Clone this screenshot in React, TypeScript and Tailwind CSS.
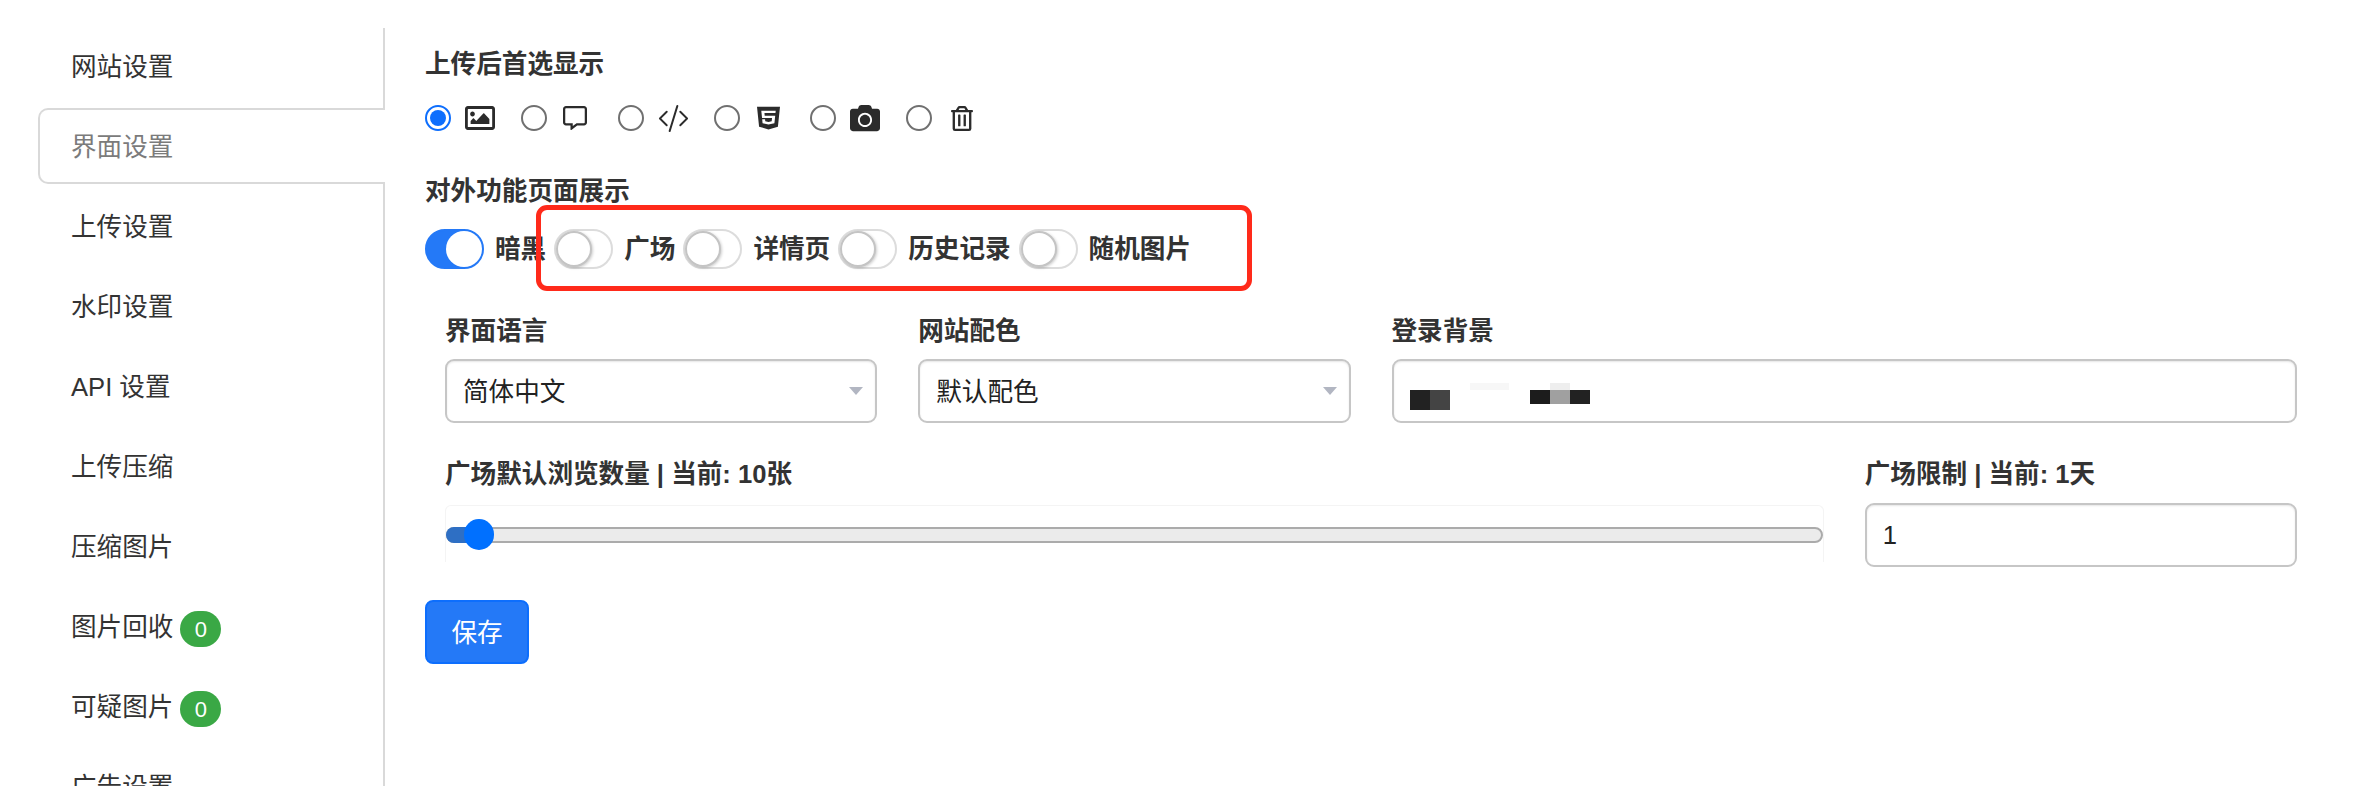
import { BsCodeSlash } from "react-icons/bs";
import { FaCamera, FaHtml5, FaRegCommentAlt, FaRegImage, FaRegTrashAlt } from "react-icons/fa";

const cjk = "font-['Helvetica','Liberation_Sans','Noto_Sans_CJK_SC',sans-serif]";

const navItems = [
  { name: "网站设置" },
  { name: "界面设置", active: true },
  { name: "上传设置" },
  { name: "水印设置" },
  { name: "API 设置" },
  { name: "上传压缩" },
  { name: "压缩图片" },
  { name: "图片回收", badge: 0 },
  { name: "可疑图片", badge: 0 },
  { name: "广告设置" },
];

const previewIcons = [
  {
    key: "image",
    icon: <FaRegImage preserveAspectRatio="none" className="ml-[14px] w-[30px] h-[32px] shrink-0" />,
  },
  { key: "chat", icon: <FaRegCommentAlt className="ml-[16px] w-[24px] h-[24px] shrink-0" /> },
  { key: "code", icon: <BsCodeSlash className="ml-[14px] w-[31px] h-[31px] shrink-0" /> },
  {
    key: "html",
    icon: <FaHtml5 preserveAspectRatio="none" className="ml-[17px] w-[23px] h-[26px] shrink-0" />,
  },
  { key: "camera", icon: <FaCamera className="ml-[14px] w-[30px] h-[30px] shrink-0" /> },
  { key: "trash", icon: <FaRegTrashAlt className="ml-[18px] w-[24px] h-[25px] shrink-0" /> },
];

const switches = [
  { name: "暗黑", on: true },
  { name: "广场" },
  { name: "详情页" },
  { name: "历史记录" },
  { name: "随机图片" },
];

const Sidebar = () => (
  <ul className="w-[347px] ml-[38px] mt-[28px] shrink-0 border-r-2 border-[#d9d9d9] h-[1000px]">
    {navItems.map(({ name, active, badge }) => (
      <li
        key={name}
        className={
          active
            ? "h-[76px] mb-[4px] -mr-[2px] pl-[31px] flex items-center gap-[7px] bg-white border-2 border-r-0 border-[#d9d9d9] rounded-l-[10px] text-[#7b7b7b]"
            : "h-[76px] mb-[4px] pl-[33px] flex items-center gap-[7px] text-[#333333]"
        }
      >
        <span className="pt-[3px] text-[25.6px] leading-none">{name}</span>
        {badge !== undefined && (
          <span className="mt-[6px] w-[41px] h-[36px] rounded-[18px] bg-[#3aa845] text-white text-[22px] font-medium flex items-center justify-center">
            {badge}
          </span>
        )}
      </li>
    ))}
  </ul>
);

const Toggle = ({ name, on }: { name: string; on?: boolean }) => (
  <div className="flex items-center gap-[11px]">
    {on ? (
      <span className="w-[59px] h-[40px] rounded-full bg-[#2479f7] border-2 border-[#2479f7] flex justify-end">
        <span className="w-[36px] h-[36px] rounded-full bg-white" />
      </span>
    ) : (
      <span className="w-[59px] h-[40px] rounded-full bg-white border-2 border-[#dcdcdc] flex">
        <span className="w-[36px] h-[36px] rounded-full bg-white border-2 border-[#c4c4c4] shadow-[1px_1px_3px_rgba(0,0,0,0.2)]" />
      </span>
    )}
    <span className="pt-[2px] text-[25.6px] font-semibold leading-none text-[#333333]">
      {name}
    </span>
  </div>
);

const fieldBox =
  "h-[64px] border-2 border-[#c6c6c6] rounded-[9px] bg-white shadow-[inset_0_1px_2px_rgba(0,0,0,0.1)] flex items-center text-[25.6px] text-[#222222]";

const SelectBox = ({ value }: { value: string }) => (
  <div className={`${fieldBox} pl-[16px] pr-[12px] justify-between`}>
    <span className="pt-[2px]">{value}</span>
    <span className="w-0 h-0 border-x-[7px] border-x-transparent border-t-[8px] border-t-[#b2b6c2]" />
  </div>
);

const FieldLabel = ({ children }: { children: React.ReactNode }) => (
  <div className="h-[32px] pt-[2px] leading-[32px] text-[25.6px] font-semibold text-[#333333] whitespace-nowrap">
    {children}
  </div>
);

const App = () => {
  return (
    <div className={`${cjk} flex h-[786px] overflow-hidden bg-white`}>
      <Sidebar />
      <div className="relative flex-1 pl-[40px] pr-[65px] pt-[46px]">
        <FieldLabel>上传后首选显示</FieldLabel>
        <div className="mt-[27px] h-[26px] flex items-center text-[#2b2b2b]">
          {previewIcons.map(({ key, icon }, index) => (
            <div key={key} className="w-[96.3px] flex items-center">
              {index === 0 ? (
                <span className="w-[26px] h-[26px] rounded-full border-2 border-[#0d6efd] p-[3px] shrink-0">
                  <span className="block w-full h-full rounded-full bg-[#0d6efd]" />
                </span>
              ) : (
                <span className="w-[26px] h-[26px] rounded-full border-2 border-[#707070] shrink-0" />
              )}
              {icon}
            </div>
          ))}
        </div>

        <div className="mt-[42px]">
          <FieldLabel>对外功能页面展示</FieldLabel>
        </div>
        <div className="mt-[24px] flex items-center gap-[8px]">
          {switches.map((s) => (
            <Toggle key={s.name} name={s.name} on={s.on} />
          ))}
        </div>

        <div className="absolute left-[151px] top-[205px] w-[716px] h-[86px] border-[5px] border-[#ff2a1a] rounded-[11px]" />

        <div className="mt-[44px] ml-[20px] grid grid-cols-4 gap-x-[41px]">
          <div>
            <FieldLabel>界面语言</FieldLabel>
            <div className="mt-[14px]">
              <SelectBox value="简体中文" />
            </div>
          </div>
          <div>
            <FieldLabel>网站配色</FieldLabel>
            <div className="mt-[14px]">
              <SelectBox value="默认配色" />
            </div>
          </div>
          <div className="col-span-2">
            <FieldLabel>登录背景</FieldLabel>
            <div className={`${fieldBox} mt-[14px] relative`}>
              {/* blurred-out url in the shot */}
              <span className="absolute left-[16px] top-[29px] flex h-[20px]">
                <span className="w-[20px] bg-[#222222]" />
                <span className="w-[20px] bg-[#444444]" />
              </span>
              <span className="absolute left-[76px] top-[22px] w-[39px] h-[7px] bg-[#f7f7f7]" />
              <span className="absolute left-[136px] top-[29px] flex h-[14px]">
                <span className="w-[20px] bg-[#1c1c1c]" />
                <span className="w-[20px] bg-[#a0a0a0]" />
                <span className="w-[20px] bg-[#222222]" />
              </span>
              <span className="absolute left-[156px] top-[22px] w-[20px] h-[7px] bg-[#eeeeee]" />
            </div>
          </div>
        </div>

        <div className="mt-[33px] ml-[20px] grid grid-cols-4 gap-x-[41px]">
          <div className="col-span-3">
            <FieldLabel>广场默认浏览数量 | 当前: 10张</FieldLabel>
            <div className="mt-[17px] h-[57px] pt-[21px] border-t border-x border-[#f4f4f4] rounded-t-[6px]">
              <div className="relative w-full h-[16px] rounded-full bg-[#ebebeb] border-2 border-[#ababab]">
                <span className="absolute -left-[2px] -top-[2px] w-[24px] h-[16px] rounded-l-full bg-[#2e6fc4]" />
                <span className="absolute left-[16px] -top-[10px] w-[30px] h-[31px] rounded-full bg-[#0070ff]" />
              </div>
            </div>
          </div>
          <div>
            <FieldLabel>广场限制 | 当前: 1天</FieldLabel>
            <div className={`${fieldBox} mt-[15px] pl-[16px]`}>1</div>
          </div>
        </div>

        <button className="mt-[33px] w-[104px] h-[64px] pt-[2px] rounded-[8px] bg-[#2479f7] border-2 border-[#0d6efd] text-white text-[25.6px]">
          保存
        </button>
      </div>
    </div>
  );
};

export default App;
